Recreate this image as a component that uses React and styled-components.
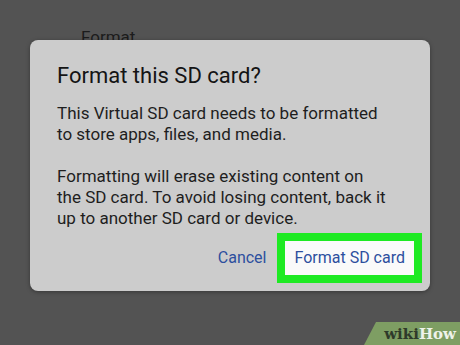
import React from 'react'
import styled, { createGlobalStyle } from 'styled-components';

const Global = createGlobalStyle`
  html, body {
    margin: 0;
    padding: 0;
    background: #535353;
  }
  body {
    font-family: Roboto, "Noto Sans", sans-serif;
  }
`;

const Screen = styled.div`
  position: relative;
  width: 460px;
  height: 345px;
  overflow: hidden;
  background: #535353;
`;

const SettingsList = styled.div`
  padding: 27px 0 0 81px;
`;

const SettingsItem = styled.div`
  font-size: 17px;
  color: #1c1c1c;
  line-height: 20px;
`;

// dialog floats over the dimmed settings screen
const Dialog = styled.div`
  position: absolute;
  left: 30px;
  top: 40px;
  width: 400px;
  height: 251px;
  box-sizing: border-box;
  background: #cccccc;
  border-radius: 8px;
  box-shadow: 0 1px 4px rgba(0, 0, 0, 0.35);
  padding: 22px 8px 8px 27px;
  display: flex;
  flex-direction: column;
`;

const Title = styled.h2`
  margin: 0;
  font-size: 22px;
  font-weight: 400;
  line-height: 28px;
  color: #141414;
`;

const Body = styled.p`
  margin: 13px 0 0;
  font-size: 17px;
  line-height: 21px;
  color: #1e1e1e;
`;

const Actions = styled.div`
  margin-top: auto;
  display: flex;
  justify-content: flex-end;
  align-items: center;
  gap: 11px;
`;

const TextButton = styled.button`
  border: none;
  background: ${p => (p.$primary ? '#fafafa' : 'transparent')};
  outline: ${p => (p.$primary ? '8px solid #1eea23' : 'none')};
  outline-offset: 0;
  margin: ${p => (p.$primary ? '8px' : '0')};
  padding: ${p => (p.$primary ? '8px 9px' : '0')};
  font-family: Roboto, "Noto Sans", sans-serif;
  font-size: 16px;
  line-height: 18px;
  color: #2d4f9e;
  cursor: pointer;
`;

const Watermark = styled.div`
  position: absolute;
  right: 0;
  bottom: 0;
  width: 96px;
  height: 23px;
  background: #7e9e63;
  clip-path: polygon(12px 0, 100% 0, 100% 100%, 0 100%);
  display: flex;
  align-items: center;
  justify-content: flex-end;
  padding-right: 4px;
  box-sizing: border-box;
  font-family: "DejaVu Serif", "Liberation Serif", serif;
  font-weight: 700;
  font-size: 15px;
`;

const Wiki = styled.span`
  color: #2e3a2a;
`;

const How = styled.span`
  color: #eef2ea;
`;

export default function App() {
  return (
    <Screen>
      <Global />
      <SettingsList>
        <SettingsItem>Format</SettingsItem>
      </SettingsList>
      <Dialog>
        <Title>Format this SD card?</Title>
        <Body>
          This Virtual SD card needs to be formatted
          <br />
          to store apps, files, and media.
          <br />
          <br />
          Formatting will erase existing content on
          <br />
          the SD card. To avoid losing content, back it
          <br />
          up to another SD card or device.
        </Body>
        <Actions>
          <TextButton>Cancel</TextButton>
          <TextButton $primary>Format SD card</TextButton>
        </Actions>
      </Dialog>
      <Watermark>
        <Wiki>wiki</Wiki>
        <How>How</How>
      </Watermark>
    </Screen>
  );
}
